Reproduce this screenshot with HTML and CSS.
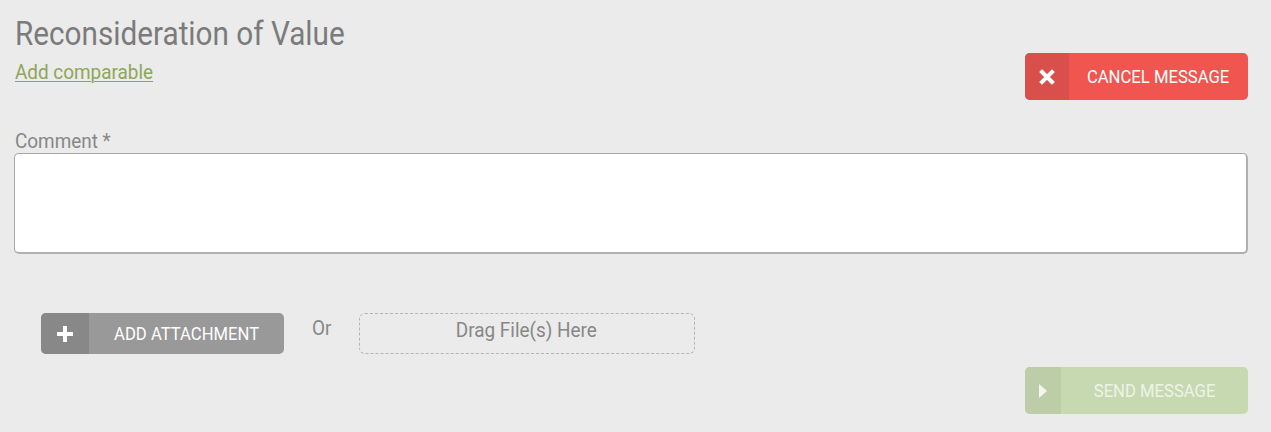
FILE: index.html
```html
<!DOCTYPE html>
<html>
<head>
<meta charset="utf-8">
<link rel="stylesheet" href="styles.css">
</head>
<body>
<div class="page">
  <div class="header">
    <div class="title-block">
      <h1 class="title"><span class="cond">Reconsideration of Value</span></h1>
      <a class="link" href="#"><span class="cond">Add comparable</span></a>
    </div>
    <button class="btn btn-cancel">
      <span class="btn-icon"><svg width="16" height="16" viewBox="0 0 16 16"><path d="M3 3 L13 13 M13 3 L3 13" stroke="#fff" stroke-width="4" stroke-linecap="square"/></svg></span>
      <span class="btn-text"><span class="cond-c">CANCEL MESSAGE</span></span>
    </button>
  </div>
  <div class="field">
    <div class="label"><span class="cond">Comment *</span></div>
    <div class="textarea"></div>
  </div>
  <div class="attach-row">
    <button class="btn btn-attach">
      <span class="btn-icon"><svg width="20" height="20" viewBox="0 0 20 20"><path d="M10 2 V18 M2 10 H18" stroke="#fff" stroke-width="4"/></svg></span>
      <span class="btn-text"><span class="cond-c">ADD ATTACHMENT</span></span>
    </button>
    <span class="or"><span class="cond">Or</span></span>
    <div class="dropzone"><span class="cond-c">Drag File(s) Here</span></div>
  </div>
  <div class="send-row">
    <button class="btn btn-send">
      <span class="btn-icon"><svg width="8" height="14" viewBox="0 0 8 14"><path d="M0 0 L8 7 L0 14 Z" fill="#f2f6ee"/></svg></span>
      <span class="btn-text"><span class="cond-c">SEND MESSAGE</span></span>
    </button>
  </div>
</div>
</body>
</html>
```
FILE: styles.css
```css
html, body {
  margin: 0;
  padding: 0;
  background: #ebebeb;
}
body {
  font-family: Roboto, "Liberation Sans", sans-serif;
}
.cond {
  display: inline-block;
  transform: scaleX(0.9);
  transform-origin: left center;
  white-space: nowrap;
}
.cond-c {
  display: inline-block;
  transform: scaleX(0.9);
  transform-origin: center center;
  white-space: nowrap;
}
.page {
  padding: 14px 23px 0 14px;
}
.header {
  display: flex;
  justify-content: space-between;
  align-items: flex-start;
}
.title-block {
  display: flex;
  flex-direction: column;
  align-items: flex-start;
}
.title {
  margin: 0 0 0 1px;
  font-size: 33px;
  font-weight: 400;
  line-height: 39px;
  color: #7b7b7b;
}
.link {
  margin: 6px 0 0 1px;
  font-size: 21px;
  line-height: 26px;
  color: #8ea65a;
  text-decoration: none;
}
.link .cond {
  text-decoration: underline;
  text-underline-offset: 2px;
  text-decoration-thickness: 1px;
}
.btn {
  display: flex;
  align-items: stretch;
  border: none;
  padding: 0;
  border-radius: 5px;
  overflow: hidden;
  font-family: Roboto, "Liberation Sans", sans-serif;
  color: #fff;
  cursor: pointer;
}
.btn-icon {
  display: flex;
  align-items: center;
  justify-content: center;
}
.btn-text {
  flex: 1;
  display: flex;
  align-items: center;
  justify-content: center;
  font-size: 18.5px;
}
.btn-cancel {
  margin-top: 39px;
  width: 223px;
  height: 47px;
  background: #f0554f;
}
.btn-cancel .btn-icon {
  width: 44px;
  background: #d94f4b;
}
.field {
  margin-top: 29px;
}
.label {
  margin-left: 1px;
  font-size: 21px;
  line-height: 24px;
  color: #878787;
}
.textarea {
  height: 98px;
  background: #fff;
  border-style: solid;
  border-width: 1px 2px 2px 1px;
  border-color: #a8a8a8 #b0b0b0 #b0b0b0 #a8a8a8;
  border-radius: 5px;
}
.attach-row {
  display: flex;
  align-items: flex-start;
  margin-top: 59px;
  padding-left: 27px;
}
.btn-attach {
  width: 243px;
  height: 41px;
  background: #999999;
}
.btn-attach .btn-icon {
  width: 48px;
  background: #888888;
}
.or {
  margin-left: 28px;
  margin-top: 3px;
  font-size: 21px;
  line-height: 24px;
  color: #878787;
}
.dropzone {
  margin-left: 25px;
  width: 334px;
  height: 35px;
  padding-top: 4px;
  border: 1px dashed #b5b5b5;
  border-radius: 6px;
  display: flex;
  justify-content: center;
  align-items: flex-start;
  font-size: 21px;
  line-height: 24px;
  color: #878787;
}
.send-row {
  display: flex;
  justify-content: flex-end;
  margin-top: 13px;
}
.btn-send {
  width: 223px;
  height: 47px;
  background: #c6d9b1;
  color: #eef3e7;
}
.btn-send .btn-icon {
  width: 36px;
  background: #bdcda8;
}
```
